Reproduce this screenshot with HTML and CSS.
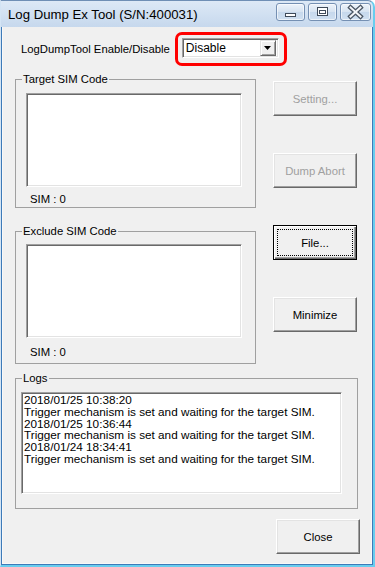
FILE: index.html
```html
<!DOCTYPE html>
<html lang="en">
<head>
    <meta charset="UTF-8">
    <meta name="viewport" content="width=device-width, initial-scale=1.0">
    <title>Log Dump Ex Tool</title>
    <link rel="stylesheet" href="styles.css">
</head>
<body>
    <div class="window">
        <div class="titlebar">
            <span class="title">Log Dump Ex Tool (S/N:400031)</span>
            <div class="caption-buttons">
                <span class="cap-btn cap-min">
                    <svg width="29" height="18" viewBox="0 0 29 18"><rect x="9.5" y="10.5" width="10" height="3" fill="#fff" stroke="#3f4b5a"/></svg>
                </span>
                <span class="cap-btn cap-max">
                    <svg width="29" height="18" viewBox="0 0 29 18"><rect x="9.5" y="4.5" width="10" height="8" fill="#fff" stroke="#3f4b5a"/><rect x="11.5" y="7.5" width="6" height="3" fill="none" stroke="#3f4b5a"/></svg>
                </span>
                <span class="cap-btn cap-close">
                    <svg width="31" height="18" viewBox="0 0 31 18"><path d="M10.5 4.5 L20.5 13.5 M20.5 4.5 L10.5 13.5" stroke="#4a5563" stroke-width="4.5" stroke-linecap="square"/><path d="M10.5 4.5 L20.5 13.5 M20.5 4.5 L10.5 13.5" stroke="#f4f6f9" stroke-width="2" stroke-linecap="square"/></svg>
                </span>
            </div>
        </div>

        <div class="client">
            <div class="mode-row">
                <span class="mode-label">LogDumpTool Enable/Disable</span>
                <div class="highlight">
                    <div class="combo">
                        <span class="combo-text">Disable</span>
                        <span class="combo-arrow">
                            <svg width="8" height="5" viewBox="0 0 8 5"><path d="M0 0 H7 L3.5 4 Z" fill="#000"/></svg>
                        </span>
                    </div>
                </div>
            </div>

            <div class="main">
                <div class="sim-column">
                    <fieldset class="group sim-group">
                        <legend>Target SIM Code</legend>
                        <div class="listbox sim-list"></div>
                        <div class="sim-count">SIM : 0</div>
                    </fieldset>
                    <fieldset class="group sim-group exclude-group">
                        <legend>Exclude SIM Code</legend>
                        <div class="listbox sim-list"></div>
                        <div class="sim-count">SIM : 0</div>
                    </fieldset>
                </div>
                <div class="action-column">
                    <button class="btn" disabled>Setting...</button>
                    <button class="btn" disabled>Dump Abort</button>
                    <button class="btn btn-default">File...</button>
                    <button class="btn">Minimize</button>
                </div>
            </div>

            <fieldset class="group logs-group">
                <legend>Logs</legend>
                <div class="listbox log-list">
                    <div>2018/01/25 10:38:20</div>
                    <div>Trigger mechanism is set and waiting for the target SIM.</div>
                    <div>2018/01/25 10:36:44</div>
                    <div>Trigger mechanism is set and waiting for the target SIM.</div>
                    <div>2018/01/24 18:34:41</div>
                    <div>Trigger mechanism is set and waiting for the target SIM.</div>
                </div>
            </fieldset>

            <div class="footer">
                <button class="btn">Close</button>
            </div>
        </div>
    </div>
</body>
</html>
```

FILE: styles.css
```css
body {
    margin: 0;
    padding: 0;
    background: #fff;
    font-family: "Liberation Sans", Arial, sans-serif;
    font-size: 11.3px;
    color: #000;
    overflow: hidden;
}

.window {
    width: 375px;
    height: 567px;
    box-sizing: border-box;
    display: flex;
    flex-direction: column;
    border-top: 1px solid #6f8fb5;
    border-left: 1px solid #d3e4f4;
    border-right: 2px solid #68cdee;
    border-bottom: 2px solid #68cdee;
    border-top-right-radius: 7px;
    background: linear-gradient(#dde9f6, #c6d8ed 26px);
}

/* title bar */
.titlebar {
    height: 26px;
    flex-shrink: 0;
    display: flex;
    justify-content: space-between;
    align-items: flex-start;
}

.title {
    font-size: 13.2px;
    line-height: 18px;
    margin: 5px 0 0 7px;
    color: #000;
}

.caption-buttons {
    display: flex;
    gap: 3px;
    margin: 2px 2px 0 0;
}

.cap-btn {
    display: block;
    width: 29px;
    height: 18px;
    box-sizing: border-box;
    border: 1px solid #7590b3;
    border-radius: 3px;
    background: linear-gradient(#edf3fa, #d6e3f1 50%, #c6d8ec 51%, #d0e0f1);
    box-shadow: inset 0 0 0 1px rgba(255, 255, 255, 0.6);
    position: relative;
}

.cap-btn svg {
    position: absolute;
    left: -1px;
    top: -1px;
}

.cap-close {
    width: 31px;
}

/* client area */
.client {
    flex: 1;
    display: flex;
    flex-direction: column;
    background: #f0f0f0;
    border-left: 1px solid #3d7ab8;
    border-right: 1px solid #3d7ab8;
    border-bottom: 1px solid #3d7ab8;
    box-shadow: inset 1px 0 0 #f8f8f8, inset -1px 0 0 #f8f8f8, inset 0 -1px 0 #f8f8f8;
}

.mode-row {
    display: flex;
    align-items: center;
    padding: 5px 0 0 19px;
}

.mode-label {
    margin-right: 5px;
}

.highlight {
    width: 112px;
    height: 34px;
    box-sizing: border-box;
    border: 3px solid #ff0000;
    border-radius: 7px;
    padding: 3px 5px 5px 4px;
}

.combo {
    height: 20px;
    box-sizing: border-box;
    background: #fff;
    border: 1px solid;
    border-color: #a0a0a0 #fff #fff #a0a0a0;
    box-shadow: inset 1px 1px 0 #696969, inset -1px -1px 0 #e3e3e3;
    display: flex;
    align-items: center;
    justify-content: space-between;
    padding: 2px 2px 2px 3px;
}

.combo-text {
    font-size: 12px;
}

.combo-arrow {
    width: 16px;
    height: 16px;
    box-sizing: border-box;
    background: #f0f0f0;
    border: 1px solid;
    border-color: #e3e3e3 #696969 #696969 #e3e3e3;
    box-shadow: inset 1px 1px 0 #fff, inset -1px -1px 0 #a0a0a0;
    display: flex;
    align-items: center;
    justify-content: center;
}

/* group boxes */
.group {
    margin: 0;
    padding: 0;
    box-sizing: border-box;
    border: 1px solid #a0a0a0;
    min-inline-size: 0;
}

.group legend {
    margin-left: 6px;
    padding: 0 1px;
    line-height: 14px;
}

.main {
    display: flex;
    margin: 6px 0 0 13px;
}

.sim-group {
    width: 241px;
    padding: 7px 0 1px 0;
}

.exclude-group {
    margin-top: 16px;
    padding: 6px 0 4px 0;
}

.listbox {
    box-sizing: border-box;
    background: #fff;
    border: 1px solid;
    border-color: #a0a0a0 #fff #fff #a0a0a0;
    box-shadow: inset 1px 1px 0 #696969, inset -1px -1px 0 #e3e3e3;
}

.sim-list {
    width: 216px;
    height: 94px;
    margin-left: 10px;
}

.sim-count {
    margin: 5px 0 0 14px;
    line-height: 14px;
}

.exclude-group .sim-count {
    margin-top: 7px;
}

.action-column {
    display: flex;
    flex-direction: column;
    gap: 37px;
    padding-top: 9px;
    margin-left: 17px;
}

.btn {
    width: 84px;
    height: 35px;
    box-sizing: border-box;
    padding: 0;
    background: #f0f0f0;
    border: 1px solid;
    border-color: #fff #696969 #696969 #fff;
    box-shadow: inset -1px -1px 0 #a0a0a0, inset 1px 1px 0 #e3e3e3;
    font-family: inherit;
    font-size: 11.3px;
    font-weight: normal;
    color: #000;
}

.btn:disabled {
    color: #a0a0a0;
}

.btn-default {
    border-color: #000;
    box-shadow: inset 1px 1px 0 #fff, inset -1px -1px 0 #696969, inset -2px -2px 0 #a0a0a0;
    outline: 1px dotted #000;
    outline-offset: -5px;
}

.logs-group {
    width: 343px;
    margin: 7px 0 0 13px;
    padding: 7px 0 14px 0;
}

.log-list {
    width: 321px;
    height: 102px;
    margin-left: 5px;
    padding: 1px 2px;
    font-size: 11.75px;
    line-height: 11.8px;
    white-space: nowrap;
}

.footer {
    display: flex;
    justify-content: flex-end;
    margin-top: auto;
    padding: 0 12px 10px 0;
}
```
